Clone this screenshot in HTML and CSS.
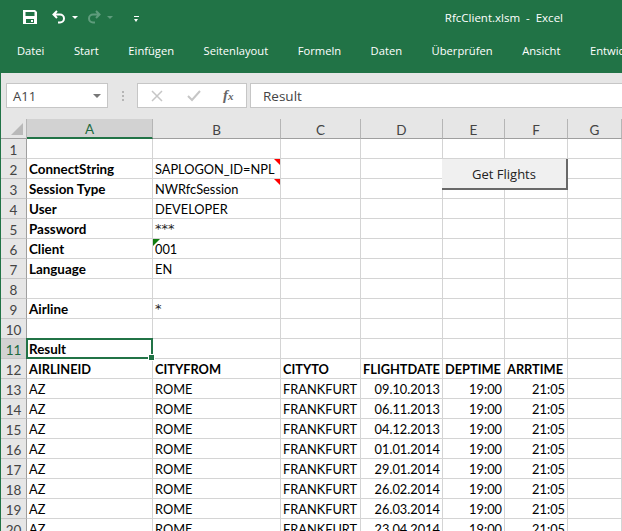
FILE: index.html
```html
<!DOCTYPE html>
<html>

<head>
    <title>RfcClient.xlsm - Excel</title>
    <link rel="stylesheet" href="styles.css">
</head>

<body>
    <!-- Title bar and ribbon tabs -->
    <div class="ribbon">
        <div class="qat">
            <svg class="qat-save" width="16" height="16" viewBox="0 0 16 16">
                <path fill="#fff" fill-rule="evenodd" d="M1 1h12l2 2v12H1zM3.500 3v4h9V3zM4 10v4h8v-4zM9 11h2v2H9z"/>
            </svg>
            <svg class="qat-undo" width="16" height="16" viewBox="0 0 16 16">
                <path fill="none" stroke="#fff" stroke-width="2" d="M6 2L2.500 5.500 6 9M3 5.500h6a4 4 0 0 1 0 8H7"/>
            </svg>
            <span class="qat-caret"></span>
            <svg class="qat-redo" width="16" height="16" viewBox="0 0 16 16">
                <path fill="none" stroke="#5f9c7c" stroke-width="2" d="M10 2l3.500 3.500L10 9M13 5.500H7a4 4 0 0 0 0 8h2"/>
            </svg>
            <span class="qat-caret dim"></span>
            <span class="qat-more"></span>
            <span class="doc-title">RfcClient.xlsm &nbsp;-&nbsp; Excel</span>
        </div>
        <div class="tabs">
            <span>Datei</span>
            <span>Start</span>
            <span>Einfügen</span>
            <span>Seitenlayout</span>
            <span>Formeln</span>
            <span>Daten</span>
            <span>Überprüfen</span>
            <span>Ansicht</span>
            <span>Entwicklertools</span>
        </div>
    </div>

    <!-- Name box and formula input -->
    <div class="formula-bar">
        <div class="name-box">A11<span class="name-caret"></span></div>
        <div class="grip"><i></i><i></i><i></i></div>
        <div class="fx-buttons">
            <svg width="12" height="12" viewBox="0 0 12 12">
                <path fill="none" stroke="#c6c6c6" stroke-width="1.500" d="M1 1l10 10M11 1L1 11"/>
            </svg>
            <svg width="14" height="12" viewBox="0 0 14 12">
                <path fill="none" stroke="#c6c6c6" stroke-width="2" d="M1 6l4 4 8-9"/>
            </svg>
            <span class="fx">f<span class="fx-x">x</span></span>
        </div>
        <div class="formula-input">Result</div>
    </div>

    <!-- Worksheet -->
    <div class="sheet">
        <table>
            <colgroup>
                <col class="col-row">
                <col class="col-a">
                <col class="col-b">
                <col class="col-c">
                <col class="col-d">
                <col class="col-e">
                <col class="col-f">
                <col class="col-g">
            </colgroup>
            <tr class="col-head">
                <th class="corner"><span class="corner-mark"></span></th>
                <th class="active">A</th><th>B</th><th>C</th><th>D</th><th>E</th><th>F</th><th>G</th>
            </tr>
            <tr><th>1</th><td></td><td></td><td></td><td></td><td></td><td></td><td></td></tr>
            <tr><th>2</th><td class="b">ConnectString</td><td class="note">SAPLOGON_ID=NPL</td><td></td><td></td><td class="has-button"><button class="macro-button">Get Flights</button></td><td></td><td></td></tr>
            <tr><th>3</th><td class="b">Session Type</td><td class="note">NWRfcSession</td><td></td><td></td><td></td><td></td><td></td></tr>
            <tr><th>4</th><td class="b">User</td><td>DEVELOPER</td><td></td><td></td><td></td><td></td><td></td></tr>
            <tr><th>5</th><td class="b">Password</td><td class="stars">***</td><td></td><td></td><td></td><td></td><td></td></tr>
            <tr><th>6</th><td class="b">Client</td><td class="warn">001</td><td></td><td></td><td></td><td></td><td></td></tr>
            <tr><th>7</th><td class="b">Language</td><td>EN</td><td></td><td></td><td></td><td></td><td></td></tr>
            <tr><th>8</th><td></td><td></td><td></td><td></td><td></td><td></td><td></td></tr>
            <tr><th>9</th><td class="b">Airline</td><td class="stars">*</td><td></td><td></td><td></td><td></td><td></td></tr>
            <tr><th>10</th><td></td><td></td><td></td><td></td><td></td><td></td><td></td></tr>
            <tr><th class="active-row">11</th><td class="b selected">Result</td><td></td><td></td><td></td><td></td><td></td><td></td></tr>
            <tr class="result-head"><th>12</th><td class="b">AIRLINEID</td><td class="b">CITYFROM</td><td class="b">CITYTO</td><td class="b">FLIGHTDATE</td><td class="b">DEPTIME</td><td class="b">ARRTIME</td><td></td></tr>
            <tr><th>13</th><td>AZ</td><td>ROME</td><td>FRANKFURT</td><td class="r">09.10.2013</td><td class="r">19:00</td><td class="r">21:05</td><td></td></tr>
            <tr><th>14</th><td>AZ</td><td>ROME</td><td>FRANKFURT</td><td class="r">06.11.2013</td><td class="r">19:00</td><td class="r">21:05</td><td></td></tr>
            <tr><th>15</th><td>AZ</td><td>ROME</td><td>FRANKFURT</td><td class="r">04.12.2013</td><td class="r">19:00</td><td class="r">21:05</td><td></td></tr>
            <tr><th>16</th><td>AZ</td><td>ROME</td><td>FRANKFURT</td><td class="r">01.01.2014</td><td class="r">19:00</td><td class="r">21:05</td><td></td></tr>
            <tr><th>17</th><td>AZ</td><td>ROME</td><td>FRANKFURT</td><td class="r">29.01.2014</td><td class="r">19:00</td><td class="r">21:05</td><td></td></tr>
            <tr><th>18</th><td>AZ</td><td>ROME</td><td>FRANKFURT</td><td class="r">26.02.2014</td><td class="r">19:00</td><td class="r">21:05</td><td></td></tr>
            <tr><th>19</th><td>AZ</td><td>ROME</td><td>FRANKFURT</td><td class="r">26.03.2014</td><td class="r">19:00</td><td class="r">21:05</td><td></td></tr>
            <tr><th>20</th><td>AZ</td><td>ROME</td><td>FRANKFURT</td><td class="r">23.04.2014</td><td class="r">19:00</td><td class="r">21:05</td><td></td></tr>
        </table>
    </div>
</body>

</html>
```

FILE: styles.css
```css
html, body {
    height: 100%;
    margin: 0;
    overflow: hidden;
}

body {
    font-family: "Open Sans", sans-serif;
    background-color: #fff;
    border-left: 1px solid #217346;
    box-sizing: border-box;
}

/* Ribbon */
.ribbon {
    height: 73px;
    margin-left: -1px;
    background-color: #217346;
    color: #fff;
    font-size: 11.200px;
    overflow: hidden;
}

.qat {
    display: flex;
    align-items: center;
    height: 34px;
    padding-left: 22px;
}

.qat-undo {
    margin-left: 13px;
}

.qat-redo {
    margin-left: 8px;
}

.qat-caret {
    width: 0;
    height: 0;
    margin-left: 5px;
    border-left: 3px solid transparent;
    border-right: 3px solid transparent;
    border-top: 3px solid #fff;
}

.qat-caret.dim {
    border-top-color: #5f9c7c;
}

.qat-more {
    width: 5px;
    height: 2px;
    margin-left: 21px;
    border-top: 1px solid #fff;
    position: relative;
}

.qat-more::after {
    content: "";
    position: absolute;
    left: 0;
    top: 2px;
    border-left: 2.500px solid transparent;
    border-right: 2.500px solid transparent;
    border-top: 3px solid #fff;
}

.doc-title {
    margin-left: auto;
    padding-right: 59px;
    font-size: 11.500px;
    white-space: pre;
}

.tabs {
    display: flex;
    gap: 29.500px;
    padding-left: 17px;
    margin-top: 9px;
    white-space: nowrap;
}

/* Formula bar */
.formula-bar {
    display: flex;
    align-items: center;
    height: 46px;
    box-sizing: border-box;
    padding: 10px 0 11px 5px;
    background-color: #e6e6e6;
    font-size: 13px;
    color: #444;
}

.name-box, .fx-buttons, .formula-input {
    height: 25px;
    box-sizing: border-box;
    background-color: #fff;
    border: 1px solid #c6c6c6;
    display: flex;
    align-items: center;
}

.name-box {
    width: 102px;
    padding: 0 6px;
    justify-content: space-between;
}

.name-caret {
    border-left: 4px solid transparent;
    border-right: 4px solid transparent;
    border-top: 4px solid #777;
}

.grip {
    display: flex;
    flex-direction: column;
    gap: 2px;
    margin: 0 13px 0 14px;
}

.grip i {
    display: block;
    width: 2px;
    height: 2px;
    background-color: #b5b5b5;
}

.fx-buttons {
    width: 110px;
    padding-left: 13px;
    gap: 24px;
}

.fx {
    font-family: "Liberation Serif", serif;
    font-style: italic;
    font-weight: bold;
    font-size: 15px;
    color: #666;
    margin-left: -2px;
}

.fx-x {
    font-size: 11px;
}

.formula-input {
    flex: 1;
    margin-left: 3px;
    margin-right: -2px;
    padding-left: 12px;
    font-size: 13.500px;
}

/* Worksheet */
.sheet {
    overflow: hidden;
}

table {
    table-layout: fixed;
    width: 621px;
    border-collapse: separate;
    border-spacing: 0;
    font-family: Lato, sans-serif;
    font-size: 12.800px;
    color: #000;
}

.col-row { width: 26px; }
.col-a { width: 126px; }
.col-b { width: 128px; }
.col-c { width: 80px; }
.col-d { width: 82px; }
.col-e { width: 62px; }
.col-f { width: 63px; }
.col-g { width: 54px; }

tr {
    height: 20px;
}

td, th {
    box-sizing: border-box;
    height: 20px;
    padding: 0 2px;
    border-right: 1px solid #d4d4d4;
    border-bottom: 1px solid #d4d4d4;
    white-space: nowrap;
    overflow: hidden;
    vertical-align: bottom;
    line-height: 18px;
}

th {
    background-color: #e6e6e6;
    font-size: 13.500px;
    font-weight: normal;
    color: #444;
    border-right-color: #9f9f9f;
    border-bottom-color: #c6c6c6;
    text-align: center;
    line-height: 16px;
}

.col-head th {
    border-right-color: #b5b5b5;
    border-bottom-color: #9f9f9f;
}

.col-head .active {
    background-color: #d2d2d2;
    color: #1d6a40;
    border-bottom: 2px solid #217346;
}

.active-row {
    background-color: #d2d2d2;
    color: #1d6a40;
}

.corner {
    position: relative;
}

.corner-mark {
    position: absolute;
    right: 3px;
    bottom: 3px;
    border-left: 12px solid transparent;
    border-bottom: 12px solid #b9b9b9;
}

.b {
    font-size: 13.400px;
    font-weight: bold;
}

.result-head .b {
    font-size: 12.800px;
}

.r {
    text-align: right;
}

.stars {
    font-family: "DejaVu Sans", sans-serif;
    font-size: 13px;
    color: #222;
}

/* Cell markers lie over the cell corner */
.note, .warn, .selected {
    position: relative;
    overflow: visible;
}

.note::after {
    content: "";
    position: absolute;
    right: 0;
    top: 0;
    border-left: 6px solid transparent;
    border-top: 6px solid #f00;
}

.warn::before {
    content: "";
    position: absolute;
    left: 0;
    top: 0;
    border-right: 7px solid transparent;
    border-top: 7px solid #107c10;
}

/* Selected cell A11 */
.selected::before {
    content: "";
    position: absolute;
    left: -1px;
    top: -1px;
    right: -1px;
    bottom: -1px;
    border: 2px solid #217346;
}

.selected::after {
    content: "";
    position: absolute;
    right: -3px;
    bottom: -3px;
    width: 5px;
    height: 5px;
    background-color: #217346;
    border: 1px solid #fff;
}

/* Macro button floats over E2:F3 */
.has-button {
    position: relative;
    overflow: visible;
}

.macro-button {
    position: absolute;
    left: -1px;
    top: 0;
    z-index: 2;
    width: 126px;
    height: 31px;
    padding: 0;
    background-color: #f0f0f0;
    border: none;
    border-right: 2px solid #696969;
    border-bottom: 2px solid #696969;
    font-family: "Open Sans", sans-serif;
    font-size: 13px;
    color: #222;
}
```
